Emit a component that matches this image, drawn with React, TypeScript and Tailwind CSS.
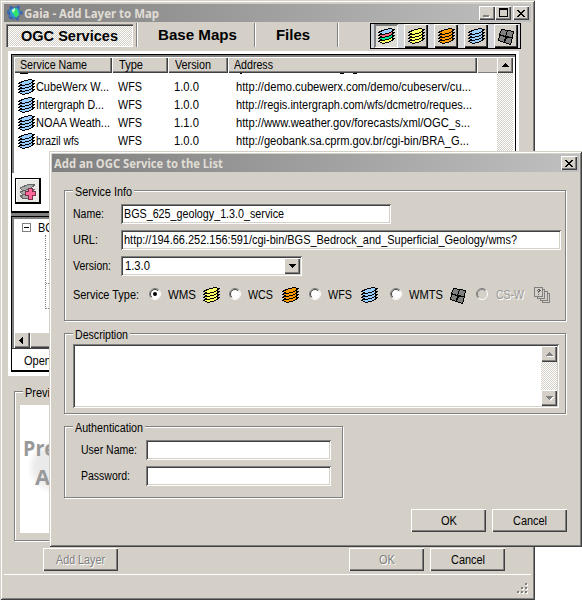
import { useLayoutEffect, useRef, useState } from 'react';
import type { ReactNode } from 'react';

const RAISED = 'bg-[#d4d0c8] shadow-[inset_1px_1px_#fff,inset_-1px_-1px_#404040,inset_-2px_-2px_#808080]';
const SUNKEN = 'bg-white shadow-[inset_1px_1px_#808080,inset_-1px_-1px_#fff,inset_2px_2px_#404040,inset_-2px_-2px_#d4d0c8]';
const GROUP = 'border border-[#808080] shadow-[1px_1px_#fff,inset_1px_1px_#fff]';
const DITHER = 'bg-[repeating-conic-gradient(#d4d0c8_0_25%,#fff_0_50%)] bg-[length:2px_2px]';

/* Text condensed or widened to an exact pixel width, like a bitmap font. */
function Fit({ w, className = '', children }: { w: number; className?: string; children: string }) {
  const ref = useRef<HTMLSpanElement>(null);
  const [scale, setScale] = useState(1);
  useLayoutEffect(() => {
    if (ref.current) setScale(w / ref.current.getBoundingClientRect().width);
  }, []);
  return (
    <span className={`inline-block shrink-0 whitespace-pre ${className}`} style={{ width: w }}>
      <span ref={ref} className="inline-block origin-left" style={{ transform: `scaleX(${scale})` }}>
        {children}
      </span>
    </span>
  );
}

function Layers({ colors }: { colors: string[] }) {
  return (
    <svg width="17" height="17" viewBox="0 0 17 17" className="shrink-0" shapeRendering="crispEdges">
      {[3, 2, 1, 0].map((i) => (
        <path
          key={i}
          d="M0.5 4.5 L4.5 2.5 L11.5 0.5 L16.5 1.5 L12.5 4.5 L5.5 6.5 Z"
          transform={`translate(0 ${i * 3})`}
          fill={colors[i % colors.length]}
          stroke="#000"
          strokeWidth="1"
        />
      ))}
    </svg>
  );
}
const BLUE = ['#99ccff'];
const YELLOW = ['#ffff66'];
const ORANGE = ['#ff9900'];
const MIXED = ['#99ccff', '#ff6677', '#00e699', '#ffff66'];

function Tiles() {
  return (
    <svg width="16" height="17" viewBox="0 0 16 17" className="shrink-0" shapeRendering="crispEdges">
      <g fill="#808080" stroke="#000" strokeWidth="1">
        <path d="M3.5 1.5 L9.5 2.5 L7.5 8.5 L1.5 6.5 Z" />
        <path d="M9.5 2.5 L15.5 3.5 L14.5 9.5 L7.5 8.5 Z" />
        <path d="M1.5 7.5 L7.5 8.5 L6.5 14.5 L0.5 12.5 Z" />
        <path d="M8.5 9.5 L14.5 9.5 L12.5 16.5 L6.5 14.5 Z" />
      </g>
    </svg>
  );
}

function Arrow({ dir, dim }: { dir: 'up' | 'down' | 'left'; dim?: boolean }) {
  const d = { up: 'M4 0h1v1h1v1h1v1h1v1H1V3h1V2h1V1h1z', down: 'M1 0h7v1H7v1H6v1H5v1H4V3H3V2H2V1H1z', left: 'M4 0h1v7H4V6H3V5H2V4H1V3h1V2h1V1h1z' }[dir];
  return (
    <svg width="9" height={dir === 'left' ? 7 : 4} className="overflow-visible" shapeRendering="crispEdges">
      {dim && <path d={d} fill="#fff" transform="translate(1 1)" />}
      <path d={d} fill={dim ? '#808080' : '#000'} />
    </svg>
  );
}

function CloseGlyph() {
  return (
    <svg width="8" height="7" shapeRendering="crispEdges">
      <path d="M0 0h2v1h1v1h2V1h1V0h2v1H7v1H6v1H5v1h1v1h1v1h1v1H6V6H5V5H3v1H2v1H0V6h1V5h1V4h1V3H2V2H1V1H0z" />
    </svg>
  );
}

function Button({ children, w, dim }: { children: string; w: number; dim?: boolean }) {
  return (
    <button className={`flex h-[23px] w-[75px] items-center justify-center pt-px ${RAISED}`}>
      <Fit w={w} className={dim ? 'text-left text-[#808080] [text-shadow:1px_1px_#fff]' : 'text-left'}>{children}</Fit>
    </button>
  );
}

function Legend({ children, w, className }: { children: string; w: number; className: string }) {
  return (
    <div className={`flex w-fit bg-[#d4d0c8] leading-[14px] ${className}`}>
      <Fit w={w}>{children}</Fit>
    </div>
  );
}

function Field({ label, lw, gap, children }: { label: string; lw: number; gap: string; children: ReactNode }) {
  return (
    <div className="mb-[6px] flex h-5 items-center">
      <div className={`shrink-0 ${gap}`}><Fit w={lw}>{label}</Fit></div>
      {children}
    </div>
  );
}

function Radio({ on, dim }: { on?: boolean; dim?: boolean }) {
  return (
    <svg width="12" height="12" viewBox="0 0 12 12" className="mb-[3px] shrink-0">
      <circle cx="6" cy="6" r="5" fill={dim ? '#d4d0c8' : '#fff'} />
      <path d="M2.1 9.9 A5.5 5.5 0 0 1 9.9 2.1" fill="none" stroke="#808080" />
      <path d="M9.900 2.100 A5.500 5.500 0 0 1 2.100 9.900" fill="none" stroke="#fff" />
      <path d="M2.800 9.200 A4.500 4.500 0 0 1 9.200 2.800" fill="none" stroke={dim ? '#808080' : '#404040'} />
      {on && <circle cx="6" cy="6" r="2" />}
    </svg>
  );
}

const services = [
  ['CubeWerx W...', 73, '1.0.0', 'http://demo.cubewerx.com/demo/cubeserv/cu...', 235],
  ['Intergraph D...', 68, '1.0.0', 'http://regis.intergraph.com/wfs/dcmetro/reques...', 236],
  ['NOAA Weath...', 74, '1.1.0', 'http://www.weather.gov/forecasts/xml/OGC_s...', 234],
  ['brazil wfs', 43, '1.0.0', 'http://geobank.sa.cprm.gov.br/cgi-bin/BRA_G...', 233],
] as const;

const HEAD = 'flex h-full items-center pt-px shadow-[inset_1px_1px_#fff,inset_-1px_-1px_#404040,inset_-2px_-2px_#808080]';

function MainWindow() {
  return (
    <div className="absolute left-0 top-0 h-[600px] w-[535px] bg-[#d4d0c8] px-1 pt-1 shadow-[inset_1px_1px_#d4d0c8,inset_-1px_-1px_#404040,inset_2px_2px_#fff,inset_-2px_-2px_#808080]">
      <div className="flex h-[18px] w-[527px] items-center bg-linear-to-r from-[#808080] to-[#c0c0c0] pl-[3px] pr-[2px]">
        <svg width="16" height="16" viewBox="0 0 16 16">
          <path d="M4 1l2 2 3-1 3 0 0 3 3 2-3 2 0 3-3 0-2 3-2-3-3 1 0-4-3-2 3-2z" fill="#4285b8" stroke="#2956a0" strokeWidth=".6" />
          <g fill="#3a62b0"><circle cx="4" cy="2.500" r="1.500" /><circle cx="11.500" cy="2" r="1.500" /><circle cx="1.700" cy="8" r="1.500" /><circle cx="14.300" cy="8" r="1.500" /><circle cx="4" cy="13" r="1.500" /><circle cx="10.500" cy="14" r="1.500" /></g>
          <circle cx="8" cy="7.500" r="4.700" fill="#2b9ed8" />
          <path d="M4.500 6l3-3 3 1.500 0 2 1.500 3-3 3-3-4z" fill="#32e665" />
          <path d="M5 5l3-2 0 2-2 3z" fill="#d8ffe0" />
        </svg>
        <Fit w={135} className="ml-px font-['Noto_Sans'] text-[11.5px] font-bold text-[#e0ddd5]">Gaia - Add Layer to Map</Fit>
        <div className="ml-auto flex">
          <div className={`flex h-[14px] w-4 items-end pb-[3px] pl-1 ${RAISED}`}><i className="h-[2px] w-[6px] bg-[#808080] shadow-[1px_1px_#fff]" /></div>
          <div className={`flex h-[14px] w-4 items-center justify-center ${RAISED}`}><i className="mb-px h-[9px] w-[9px] border border-t-2 border-black" /></div>
          <div className={`ml-[2px] flex h-[14px] w-4 items-center justify-center ${RAISED}`}><CloseGlyph /></div>
        </div>
      </div>

      <div className="flex h-[29px] items-start pl-[2px] pt-px font-['Liberation_Sans'] text-[15px] font-bold">
        <div className={`mt-px flex h-[23px] w-[127px] items-center justify-center shadow-[inset_1px_1px_#808080,inset_2px_2px_#404040,inset_-1px_-1px_#fff] ${DITHER}`}>
          <Fit w={97}>OGC Services</Fit>
        </div>
        <i className="ml-[3px] h-6 w-[2px] border-l border-[#808080] bg-white" />
        <div className="flex h-[22px] w-[116px] items-center pl-5"><Fit w={79}>Base Maps</Fit></div>
        <i className="h-6 w-[2px] border-l border-[#808080] bg-white" />
        <div className="flex h-[22px] w-[81px] items-center pl-5"><Fit w={34}>Files</Fit></div>
        <i className="h-6 w-[2px] border-l border-[#808080] bg-white" />
        <div className="ml-[31px] flex h-[26px] w-[151px] items-center gap-[6px] border border-black bg-[#d3d5d9] pl-[3px]">
          <div className="flex h-6 w-6 items-center justify-center bg-[#dfddd8] shadow-[inset_1px_1px_#808080,inset_-1px_-1px_#fff,inset_2px_2px_#808080]"><Layers colors={MIXED} /></div>
          {[YELLOW, ORANGE, BLUE].map((c) => (
            <div key={c[0]} className="flex h-6 w-6 items-center justify-center bg-[#d4d0c8] shadow-[inset_1px_1px_#fff,inset_-1px_-1px_#000,inset_-2px_-2px_#404040]"><Layers colors={c} /></div>
          ))}
          <div className="flex h-6 w-6 items-center justify-center bg-[#d4d0c8] shadow-[inset_1px_1px_#fff,inset_-1px_-1px_#000,inset_-2px_-2px_#404040]"><Tiles /></div>
        </div>
      </div>

      <div className="ml-1 h-[325px] w-[511px] bg-white pl-[3px] pt-[3px]">
        <div className="h-[159px] w-[505px] border border-b-2 border-black">
          <div className="h-[118px] border-l-2 border-t-2 border-[#808080]">
            <div className="flex h-4 w-[499px] bg-[#d4d0c8]">
              <div className={`${HEAD} w-[98px] pl-[6px]`}><Fit w={67}>Service Name</Fit></div>
              <div className={`${HEAD} w-14 pl-[7px]`}><Fit w={24}>Type</Fit></div>
              <div className={`${HEAD} w-[60px] pl-[7px]`}><Fit w={36}>Version</Fit></div>
              <div className={`${HEAD} w-[249px] pl-[6px]`}><Fit w={39}>Address</Fit></div>
              <div className="h-full w-5 shadow-[inset_1px_1px_#fff,inset_0_-1px_#808080]" />
              <div className={`flex h-4 w-4 items-center justify-center ${RAISED}`}><Arrow dir="up" /></div>
            </div>
            <div className="flex h-[100px]">
              <div className="w-[483px] pl-1">
                <div className="flex h-[5px] items-start"><i className="ml-[2px] h-px w-2 bg-black" /><i className="ml-[212px] h-px w-[2px] bg-black" /><i className="ml-[98px] h-px w-1 bg-black" /><i className="ml-[9px] h-px w-1 bg-black" /></div>
                {services.map(([name, nw, v, url, uw]) => (
                  <div key={name} className="flex h-[18px] items-center">
                    <Layers colors={BLUE} />
                    <div className="w-[83px] pl-px"><Fit w={nw}>{name}</Fit></div>
                    <div className="w-[56px]"><Fit w={24}>WFS</Fit></div>
                    <div className="w-[62px]"><Fit w={25}>{v}</Fit></div>
                    <Fit w={uw}>{url}</Fit>
                  </div>
                ))}
              </div>
              <div className={`w-4 ${DITHER}`} />
            </div>
          </div>
          <div className="ml-[3px] mt-[5px] h-[26px] w-[26px] bg-[#ebe9e5] p-[5px] shadow-[inset_1px_1px_#000,inset_-2px_-2px_#000,inset_2px_2px_#fff]">
            <svg width="17" height="17" shapeRendering="crispEdges">
              <path d="M0 5l9-4 6 1-4 3-8 3zM0 9l9-3 6 0-4 3-8 3zM0 13l9-3 3 2-4 3-4 1z" fill="#aaa" stroke="#666" />
              <path d="M8.500 5.500h4v3h3v4h-3v4h-4v-4h-3v-4h3z" fill="#ff6699" stroke="#803048" />
            </svg>
          </div>
        </div>
        <div className="h-[3px] w-[505px] bg-[#808080]" />
        <div className="h-[156px] w-[505px] border border-b-2 border-black">
          <div className="h-[131px] border-l-2 border-t-2 border-[#808080]">
            <div className="flex h-[113px] pl-2 pt-1">
              <div className="flex h-[9px] w-[9px] items-center justify-center border border-[#808080]"><i className="h-px w-[5px] bg-black" /></div>
              <div className="-mt-px ml-[7px] leading-[13px]">
                <Fit w={23}>BGS</Fit>
                <div className="ml-[7px] grid h-[74px] w-2 grid-rows-3 border-l border-dotted border-[#808080]">
                  <i className="border-b border-dotted border-[#808080]" />
                  <i className="border-b border-dotted border-[#808080]" />
                  <i className="border-b border-dotted border-[#808080]" />
                </div>
              </div>
            </div>
            <div className="flex h-4 w-[499px] bg-[#d4d0c8]">
              <div className={`flex h-4 w-4 items-center justify-center ${RAISED}`}><Arrow dir="left" /></div>
              <div className={`h-4 w-[483px] ${RAISED}`} />
            </div>
          </div>
          <div className="flex h-[22px] items-center border-t border-[#404040] pl-3 pt-1"><Fit w={27}>Open</Fit></div>
        </div>
      </div>

      <div className={`ml-[10px] mt-[15px] h-[150px] w-[505px] ${GROUP}`}>
        <Legend w={39} className="-mt-[7px] ml-2 h-[14px] px-[2px] relative top-px">Preview</Legend>
        <div className="ml-[5px] mt-[6px] h-[128px] w-[490px] bg-[radial-gradient(circle_at_34px_62px,#eaeaea_0_18px,#fff_27px)] pl-[3px] pt-[28px] font-['Open_Sans'] text-[22px] font-bold leading-[29px] text-[#999]">
          <div><Fit w={33}>Pre</Fit></div>
          <div className="ml-[12px]"><Fit w={15}>A</Fit></div>
        </div>
      </div>
      <div className="mt-[7px] flex pl-[39px]">
        <Button w={49} dim>Add Layer</Button>
        <div className="ml-[231px] flex gap-[6px]"><Button w={16} dim>OK</Button><Button w={34}>Cancel</Button></div>
      </div>
      <div className="mt-[3px] flex h-[24px] w-[527px] items-end justify-end border-t border-white pb-[3px] pr-[2px]">
        <svg width="12" height="12" shapeRendering="crispEdges">
          {[[8, 0], [4, 4], [8, 4], [0, 8], [4, 8], [8, 8]].map(([x, y]) => (
            <g key={`${x}-${y}`}><rect x={x + 1} y={y + 1} width="2" height="2" fill="#fff" /><rect x={x} y={y} width="2" height="2" fill="#808080" /></g>
          ))}
        </svg>
      </div>
    </div>
  );
}

function Dialog() {
  return (
    <div className="absolute left-[49px] top-[151px] h-[396px] w-[533px] bg-[#d4d0c8] pl-[3px] pt-[3px] shadow-[inset_1px_1px_#d4d0c8,inset_-1px_-1px_#404040,inset_2px_2px_#fff,inset_-2px_-2px_#808080]">
      <div className="flex h-[18px] w-[527px] items-center bg-linear-to-r from-[#808080] to-[#c0c0c0] pl-[2px] pr-[2px]">
        <Fit w={169} className="font-['Noto_Sans'] text-[11.5px] font-bold text-[#e0ddd5]">Add an OGC Service to the List</Fit>
        <div className={`ml-auto flex h-[14px] w-4 items-center justify-center ${RAISED}`}><CloseGlyph /></div>
      </div>
      <div className={`ml-3 mt-[18px] h-[131px] w-[502px] pl-2 ${GROUP}`}>
        <Legend w={57} className="-mt-[7px] h-[14px] px-[2px] relative top-px">Service Info</Legend>
        <div className="mt-[6px]">
          <Field label="Name:" lw={31} gap="w-12"><div className={`flex h-5 w-[270px] items-center pl-[3px] ${SUNKEN}`}><Fit w={160}>BGS_625_geology_1.3.0_service</Fit></div></Field>
          <Field label="URL:" lw={25} gap="w-12"><div className={`flex h-5 w-[440px] items-center pl-[3px] ${SUNKEN}`}><Fit w={393}>http://194.66.252.156:591/cgi-bin/BGS_Bedrock_and_Superficial_Geology/wms?</Fit></div></Field>
          <Field label="Version:" lw={38} gap="w-12">
            <div className={`flex h-5 w-[181px] items-center justify-between py-[2px] pl-1 pr-[2px] ${SUNKEN}`}>
              <Fit w={25}>1.3.0</Fit>
              <div className={`flex h-4 w-4 items-center justify-center ${RAISED}`}><Arrow dir="down" /></div>
            </div>
          </Field>
        </div>
        <div className="mt-[8px] flex h-[22px] items-center">
          <div className="w-[76px]"><Fit w={66}>Service Type:</Fit></div>
          <Radio on /><div className="w-[42px] pl-[7px]"><Fit w={28}>WMS</Fit></div><Layers colors={YELLOW} />
          <div className="ml-[9px] flex items-center"><Radio /><div className="w-[41px] pl-[7px]"><Fit w={25}>WCS</Fit></div><Layers colors={ORANGE} /></div>
          <div className="ml-[10px] flex items-center"><Radio /><div className="w-[40px] pl-[7px]"><Fit w={24}>WFS</Fit></div><Layers colors={BLUE} /></div>
          <div className="ml-[12px] flex items-center"><Radio /><div className="w-[48px] pl-[7px]"><Fit w={34}>WMTS</Fit></div><Tiles /></div>
          <div className="ml-[10px] flex items-center"><Radio dim /><div className="w-[46px] pl-[8px]"><Fit w={28} className="text-[#999] [text-shadow:1px_1px_#fff]">CS-W</Fit></div>
            <svg width="17" height="17" fill="#d4d0c8" stroke="#808080" shapeRendering="crispEdges">
              <rect x="8.500" y="6.500" width="7" height="9" />
              <rect x="6.500" y="4.500" width="7" height="9" />
              <rect x="3.500" y="2.500" width="7" height="9" />
              <rect x=".5" y=".5" width="8" height="9" />
              <path d="M3 3h1V2h2v1h1v1H6v1H5v1H4V4h1V3H4v1H3zM4 7h1v1H4z" fill="#606060" stroke="none" />
            </svg>
          </div>
        </div>
      </div>
      <div className={`ml-3 mt-3 h-[81px] w-[502px] pl-2 ${GROUP}`}>
        <Legend w={53} className="-mt-[7px] h-[14px] px-[2px] relative top-px">Description</Legend>
        <div className={`mt-[3px] flex h-16 w-[486px] justify-end p-[2px] ${SUNKEN}`}>
          <div className={`flex h-[60px] w-4 flex-col justify-between ${DITHER}`}>
            <div className={`flex h-4 w-4 items-center justify-center ${RAISED}`}><Arrow dir="up" dim /></div>
            <div className={`flex h-4 w-4 items-center justify-center ${RAISED}`}><Arrow dir="down" dim /></div>
          </div>
        </div>
      </div>
      <div className={`ml-3 mt-3 h-[72px] w-[279px] ${GROUP}`}>
        <Legend w={68} className="-mt-[7px] ml-2 h-[14px] px-[2px] relative top-px">Authentication</Legend>
        <div className="ml-4 mt-[6px]">
          <Field label="User Name:" lw={56} gap="w-[65px]"><div className={`h-5 w-[185px] ${SUNKEN}`} /></Field>
          <Field label="Password:" lw={49} gap="w-[65px]"><div className={`h-5 w-[185px] ${SUNKEN}`} /></Field>
        </div>
      </div>
      <div className="mt-[11px] flex gap-[6px] pl-[359px]"><Button w={16}>OK</Button><Button w={34}>Cancel</Button></div>
    </div>
  );
}

export default function App() {
  return (
    <div className="relative h-[600px] w-[582px] overflow-hidden bg-white font-['Liberation_Sans',sans-serif] text-[12px] leading-[15px] text-black">
      <MainWindow />
      <Dialog />
    </div>
  );
}
